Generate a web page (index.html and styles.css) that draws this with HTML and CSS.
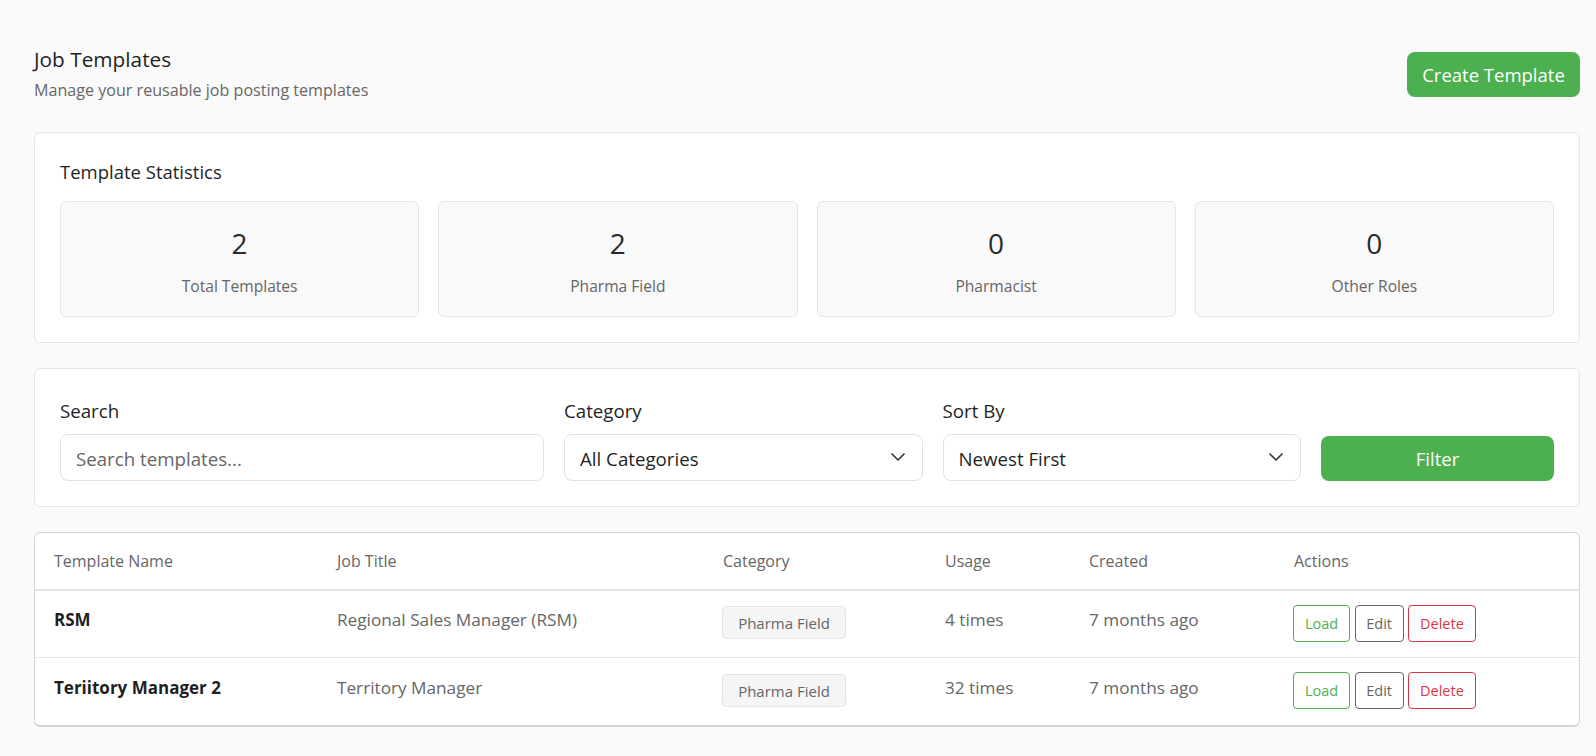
FILE: index.html
```html
<!DOCTYPE html>
<html lang="en">
<head>
    <meta charset="UTF-8">
    <meta name="viewport" content="width=device-width, initial-scale=1.0">
    <title>Job Templates</title>
    <link rel="stylesheet" href="styles.css">
</head>
<body>
    <div class="page">
        <div class="page-header">
            <div>
                <h1>Job Templates</h1>
                <p class="subtitle">Manage your reusable job posting templates</p>
            </div>
            <button class="btn-primary create-btn">Create Template</button>
        </div>

        <div class="panel stats-panel">
            <h2>Template Statistics</h2>
            <div class="stats-grid">
                <div class="stat-card">
                    <div class="stat-number">2</div>
                    <div class="stat-label">Total Templates</div>
                </div>
                <div class="stat-card">
                    <div class="stat-number">2</div>
                    <div class="stat-label">Pharma Field</div>
                </div>
                <div class="stat-card">
                    <div class="stat-number">0</div>
                    <div class="stat-label">Pharmacist</div>
                </div>
                <div class="stat-card">
                    <div class="stat-number">0</div>
                    <div class="stat-label">Other Roles</div>
                </div>
            </div>
        </div>

        <div class="panel filter-panel">
            <div class="field">
                <label for="search">Search</label>
                <input type="text" id="search" placeholder="Search templates...">
            </div>
            <div class="field">
                <label for="category">Category</label>
                <div class="select-wrap">
                    <select id="category">
                        <option>All Categories</option>
                    </select>
                    <svg class="chevron" viewBox="0 0 16 16"><path d="M2 5l6 6 6-6"/></svg>
                </div>
            </div>
            <div class="field">
                <label for="sort">Sort By</label>
                <div class="select-wrap">
                    <select id="sort">
                        <option>Newest First</option>
                    </select>
                    <svg class="chevron" viewBox="0 0 16 16"><path d="M2 5l6 6 6-6"/></svg>
                </div>
            </div>
            <button class="btn-primary filter-btn">Filter</button>
        </div>

        <div class="table-wrap">
            <table>
                <thead>
                    <tr>
                        <th class="col-name">Template Name</th>
                        <th class="col-title">Job Title</th>
                        <th class="col-category">Category</th>
                        <th class="col-usage">Usage</th>
                        <th class="col-created">Created</th>
                        <th>Actions</th>
                    </tr>
                </thead>
                <tbody>
                    <tr>
                        <td class="name">RSM</td>
                        <td>Regional Sales Manager (RSM)</td>
                        <td><span class="badge">Pharma Field</span></td>
                        <td>4 times</td>
                        <td>7 months ago</td>
                        <td>
                            <div class="actions">
                                <button class="btn-sm load">Load</button>
                                <button class="btn-sm edit">Edit</button>
                                <button class="btn-sm delete">Delete</button>
                            </div>
                        </td>
                    </tr>
                    <tr>
                        <td class="name">Teriitory Manager 2</td>
                        <td>Territory Manager</td>
                        <td><span class="badge">Pharma Field</span></td>
                        <td>32 times</td>
                        <td>7 months ago</td>
                        <td>
                            <div class="actions">
                                <button class="btn-sm load">Load</button>
                                <button class="btn-sm edit">Edit</button>
                                <button class="btn-sm delete">Delete</button>
                            </div>
                        </td>
                    </tr>
                </tbody>
            </table>
        </div>
    </div>
</body>
</html>
```

FILE: styles.css
```css
* {
    box-sizing: border-box;
}

body {
    margin: 0;
    background: #fafafa;
    color: #1f1f1f;
    font-family: "Open Sans", "Noto Sans", sans-serif;
}

.page {
    padding: 52px 16px 0 34px;
}

.page-header {
    display: flex;
    justify-content: space-between;
    align-items: flex-start;
    margin-bottom: 31px;
}

h1 {
    margin: -7px 0 0;
    font-size: 20.8px;
    line-height: 28px;
    font-weight: 400;
}

.subtitle {
    margin: 6px 0 0;
    font-size: 16.1px;
    line-height: 22px;
    color: #666;
}

.btn-primary {
    background: #4caf50;
    color: #fff;
    border: none;
    border-radius: 8px;
    font-family: inherit;
    font-size: 18.5px;
}

.create-btn {
    width: 173px;
    height: 45px;
}

.panel {
    background: #fff;
    border: 1px solid #e5e5e5;
    border-radius: 6px;
    padding: 25px;
}

.stats-panel {
    height: 211px;
    padding-top: 26px;
    margin-bottom: 25px;
}

h2 {
    margin: 0 0 16px;
    font-size: 18.5px;
    line-height: 26px;
    font-weight: 400;
}

.stats-grid {
    display: grid;
    grid-template-columns: repeat(4, 1fr);
    gap: 19px;
}

.stat-card {
    height: 116px;
    background: #f9f9f9;
    border: 1px solid #e5e5e5;
    border-radius: 6px;
    text-align: center;
    padding-top: 22px;
}

.stat-number {
    font-size: 28px;
    line-height: 38px;
    color: #2b2b2b;
}

.stat-label {
    margin-top: 13px;
    font-size: 15.6px;
    line-height: 22px;
    color: #666;
}

.filter-panel {
    display: grid;
    grid-template-columns: 484px 1fr 1fr 233px;
    gap: 20px;
    align-items: end;
    height: 139px;
    padding-bottom: 25px;
    margin-bottom: 25px;
}

.field label {
    display: block;
    margin-bottom: 10px;
    font-size: 18.7px;
    line-height: 26px;
}

input,
select {
    display: block;
    width: 100%;
    height: 47px;
    padding: 2px 15px 0;
    background: #fff;
    border: 1px solid #dfe1e6;
    border-radius: 8px;
    color: #1f1f1f;
    font-family: inherit;
    font-size: 18.7px;
    appearance: none;
}

input::placeholder {
    color: #666;
}

.select-wrap {
    position: relative;
}

.chevron {
    position: absolute;
    top: 15px;
    right: 17px;
    width: 16px;
    height: 16px;
    fill: none;
    stroke: #343a40;
    stroke-width: 1.7;
    stroke-linecap: round;
    stroke-linejoin: round;
}

.filter-btn {
    height: 45px;
}

.table-wrap {
    background: #fff;
    border: 1px solid #d4d4d4;
    border-bottom-width: 2px;
    border-radius: 6px;
    overflow: hidden;
}

table {
    width: 100%;
    border-collapse: collapse;
    table-layout: fixed;
}

th {
    height: 57px;
    padding: 0 19px;
    border-bottom: 2px solid #e5e5e5;
    text-align: left;
    font-size: 16px;
    font-weight: 400;
    color: #666;
}

.col-name { width: 283px; }
.col-title { width: 386px; }
.col-category { width: 222px; }
.col-usage { width: 144px; }
.col-created { width: 205px; }

td {
    height: 67px;
    padding: 0 19px 8px;
    border-bottom: 1px solid #e5e5e5;
    font-size: 17.2px;
    color: #666;
}

tbody tr:last-child td {
    height: 68px;
    border-bottom: none;
}

td.name {
    font-weight: 700;
    font-size: 17px;
    color: #1f1f1f;
}

.badge {
    display: inline-block;
    width: 124px;
    height: 33px;
    margin: 6px 0 0 -1px;
    background: #f5f5f5;
    border: 1px solid #e5e5e5;
    border-radius: 4px;
    text-align: center;
    font-size: 15px;
    line-height: 32px;
}

.actions {
    display: flex;
    gap: 4.5px;
    margin: 7px 0 0 -1px;
}

.btn-sm {
    height: 37px;
    padding: 0 11px;
    background: #fff;
    border: 1px solid;
    border-radius: 4px;
    font-family: inherit;
    font-size: 14.5px;
}

.load {
    color: #4caf50;
    border-color: #4caf50;
}

.edit {
    padding: 0 10.5px;
    color: #666;
    border-color: #666;
}

.delete {
    color: #dc3545;
    border-color: #dc3545;
}
```
